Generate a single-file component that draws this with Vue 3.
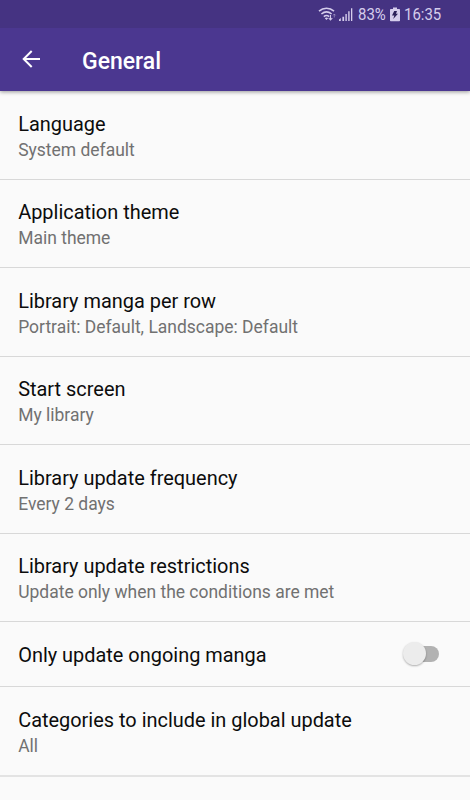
<template>
  <div class="screen">
    <header class="app-bar">
      <div class="status-bar">
        <svg class="wifi" width="19" height="16" viewBox="0 0 19 16" fill="none">
          <path d="M1 5.2C5.4 1.3 11.6 1.3 16 5.2M3.4 8C6.6 5.3 10.4 5.3 13.6 8M5.8 10.6C7.6 9.2 9.4 9.2 11.2 10.6" stroke="currentColor" stroke-width="1.6" />
          <path d="M6.8 12.2Q8.5 11 10.1 12.2L8.5 14Z" fill="currentColor" />
          <path d="M12.5 9V13.5M10.7 12L12.5 14L14.3 12" stroke="currentColor" stroke-width="1.1" />
          <path d="M16.3 11.5V8.3M15 9.4L16.3 8L17.6 9.4" stroke="currentColor" stroke-width="1" opacity="0.45" />
        </svg>
        <svg class="signal" width="14" height="15" viewBox="0 0 14 15" fill="currentColor">
          <path d="M0 12.5L1.8 11V14H0ZM3.4 9.8H5.1V14H3.4ZM6.4 7H7.8V14H6.4ZM9.2 4.2H10.6V14H9.2ZM12 1.2H13.3V14H12Z" />
        </svg>
        <span class="percent">83%</span>
        <svg class="battery" width="10" height="15" viewBox="0 0 10 15">
          <path d="M3 0.5H7V2H9.2Q10 2 10 2.8V13.5Q10 14.3 9.2 14.3H0.8Q0 14.3 0 13.5V2.8Q0 2 0.8 2H3Z" fill="currentColor" />
          <path d="M4.2 4H7L6 6.8H8L3.2 12L4.3 8.5H2Z" fill="#2c2159" />
        </svg>
        <span class="clock">16:35</span>
      </div>
      <div class="toolbar">
        <svg class="back" width="18" height="18" viewBox="0 0 18 18" fill="none" stroke="#fff" stroke-width="2">
          <path d="M18 9H2M9.7 1L1.7 9L9.7 17" />
        </svg>
        <h1>General</h1>
      </div>
    </header>

    <main>
      <div
        v-for="item in settings"
        :key="item.title"
        class="preference"
        :class="{ 'with-switch': item.toggle }"
      >
        <div class="labels">
          <div class="title">{{ item.title }}</div>
          <div v-if="item.summary" class="summary">{{ item.summary }}</div>
        </div>
        <button
          v-if="item.toggle"
          class="switch"
          :class="{ on: enabled }"
          @click="enabled = !enabled"
        ></button>
      </div>
    </main>
  </div>
</template>

<script setup>
import { ref } from 'vue';

const enabled = ref(false);

const settings = [
  { title: 'Language', summary: 'System default' },
  { title: 'Application theme', summary: 'Main theme' },
  { title: 'Library manga per row', summary: 'Portrait: Default, Landscape: Default' },
  { title: 'Start screen', summary: 'My library' },
  { title: 'Library update frequency', summary: 'Every 2 days' },
  { title: 'Library update restrictions', summary: 'Update only when the conditions are met' },
  { title: 'Only update ongoing manga', toggle: true },
  { title: 'Categories to include in global update', summary: 'All' },
];
</script>

<style>
body {
  margin: 0;
  background: #fafafa;
}
</style>

<style scoped>
.screen {
  height: 800px;
  overflow: hidden;
  background: #fafafa;
  color: #0c0c0c;
  font-family: Roboto, "Liberation Sans", sans-serif;
}

.app-bar {
  position: relative;
  height: 91px;
  background: #4b3790;
  box-shadow: 0 1px 4px rgba(0, 0, 0, 0.4);
}

.status-bar {
  display: flex;
  align-items: center;
  box-sizing: border-box;
  height: 28px;
  padding: 0 29px 0 0;
  justify-content: flex-end;
  background: #453382;
  color: #d5cdec;
  font-size: 17px;
  line-height: 28px;
}

.signal {
  margin-left: 2px;
}

/* the status bar face is narrower than regular Roboto */
.percent,
.clock {
  margin-left: 5px;
  white-space: nowrap;
  transform: scaleX(0.88);
  transform-origin: left;
}

.percent {
  width: 27px;
}

.battery {
  margin-left: 5px;
}

.clock {
  width: 37px;
  margin-left: 4px;
}

.toolbar {
  display: flex;
  align-items: center;
  height: 63px;
  padding-left: 22px;
}

.back {
  margin-top: -1px;
}

h1 {
  margin: 4px 0 0 42px;
  color: #fff;
  font-size: 23px;
  font-weight: 500;
  line-height: 30px;
}

main {
  padding-top: 0.6px;
}

.preference {
  display: flex;
  align-items: center;
  justify-content: space-between;
  box-sizing: border-box;
  height: 88.4px;
  padding: 4px 31px 0 18.2px;
  border-bottom: 1px solid #d8d8d8;
}

.with-switch {
  height: 65px;
}

.preference:last-child {
  height: 89.6px;
  padding-top: 5px;
  border-bottom: 2px solid #e3e3e3;
}

.title {
  font-size: 19.93px;
  line-height: 26px;
}

.summary {
  color: #717171;
  font-size: 17.48px;
  line-height: 24.5px;
}

.switch {
  position: relative;
  width: 33px;
  height: 16px;
  margin-top: -3px;
  padding: 0;
  border: 0;
  border-radius: 8px;
  background: #b2b2b2;
}

.switch::before {
  content: "";
  position: absolute;
  top: -4px;
  left: -3px;
  width: 23px;
  height: 23px;
  border-radius: 50%;
  background: #ececec;
  box-shadow: 0 1px 2px rgba(0, 0, 0, 0.3);
}

.switch.on::before {
  left: 13px;
}
</style>
